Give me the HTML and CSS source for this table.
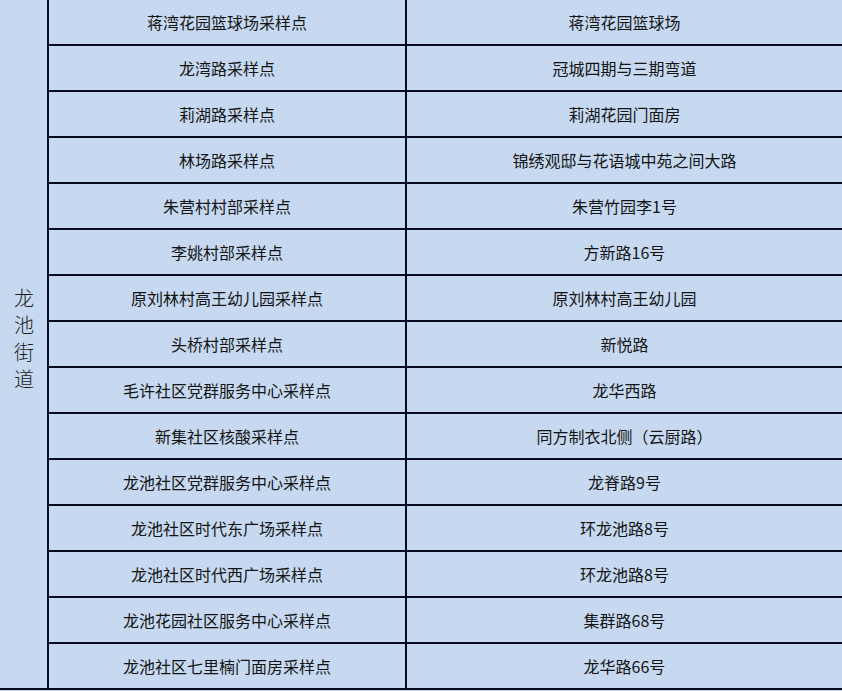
FILE: index.html
```html
<!DOCTYPE html>
<html lang="zh">
<head>
<meta charset="utf-8">
<link rel="stylesheet" href="styles.css">
</head>
<body>
<table class="sites">
  <colgroup>
    <col class="c-area">
    <col class="c-name">
    <col class="c-addr">
  </colgroup>
  <tbody>
    <tr><td class="area" rowspan="15"><span class="area-text">龙池街道</span></td><td class="name">蒋湾花园篮球场采样点</td><td class="addr">蒋湾花园篮球场</td></tr>
    <tr><td class="name">龙湾路采样点</td><td class="addr">冠城四期与三期弯道</td></tr>
    <tr><td class="name">莉湖路采样点</td><td class="addr">莉湖花园门面房</td></tr>
    <tr><td class="name">林场路采样点</td><td class="addr">锦绣观邸与花语城中苑之间大路</td></tr>
    <tr><td class="name">朱营村村部采样点</td><td class="addr">朱营竹园李1号</td></tr>
    <tr><td class="name">李姚村部采样点</td><td class="addr">方新路16号</td></tr>
    <tr><td class="name">原刘林村高王幼儿园采样点</td><td class="addr">原刘林村高王幼儿园</td></tr>
    <tr><td class="name">头桥村部采样点</td><td class="addr">新悦路</td></tr>
    <tr><td class="name">毛许社区党群服务中心采样点</td><td class="addr">龙华西路</td></tr>
    <tr><td class="name">新集社区核酸采样点</td><td class="addr">同方制衣北侧（云厨路）</td></tr>
    <tr><td class="name">龙池社区党群服务中心采样点</td><td class="addr">龙脊路9号</td></tr>
    <tr><td class="name">龙池社区时代东广场采样点</td><td class="addr">环龙池路8号</td></tr>
    <tr><td class="name">龙池社区时代西广场采样点</td><td class="addr">环龙池路8号</td></tr>
    <tr><td class="name">龙池花园社区服务中心采样点</td><td class="addr">集群路68号</td></tr>
    <tr><td class="name">龙池社区七里楠门面房采样点</td><td class="addr">龙华路66号</td></tr>
  </tbody>
</table>
</body>
</html>
```
FILE: styles.css
```css
html, body {
  margin: 0;
  padding: 0;
  background: #c6d9f0;
}
body {
  width: 842px;
  height: 691px;
  overflow: hidden;
  font-family: "Noto Sans CJK SC", "Noto Sans", sans-serif;
  color: #141414;
}
.sites {
  width: 842px;
  border-collapse: collapse;
  table-layout: fixed;
}
.c-area { width: 48px; }
.c-name { width: 358px; }
.c-addr { width: 436px; }
.sites td {
  height: 44px;
  padding: 0;
  border-bottom: 2px solid #0a0a20;
  text-align: center;
  vertical-align: middle;
  font-size: 16px;
  line-height: 20px;
  white-space: nowrap;
}
.sites td.name,
.sites td.addr {
  border-left: 2px solid #0a0a20;
}
.area-text {
  display: inline-block;
  writing-mode: vertical-rl;
  font-size: 20px;
  letter-spacing: 7px;
  font-weight: 300;
  color: #1e1e1e;
  margin-top: -2px;
}
```
